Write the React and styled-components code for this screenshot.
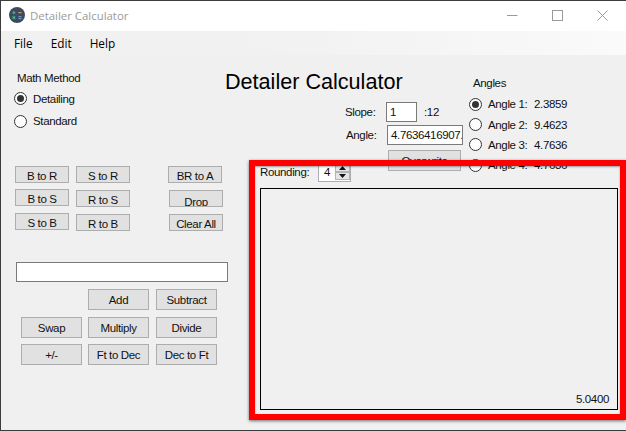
import React from "react";
import styled, { createGlobalStyle } from "styled-components";

const GlobalStyle = createGlobalStyle`
  html, body {
    margin: 0;
    padding: 0;
    background: #f0f0f0;
  }
`;

const Window = styled.div`
  position: relative;
  width: 626px;
  height: 431px;
  box-sizing: border-box;
  overflow: hidden;
  display: flex;
  flex-direction: column;
  background: #f0f0f0;
  border-top: 1px solid #3c3c3c;
  border-left: 1px solid #3c3c3c;
  border-bottom: 1px solid #3c3c3c;
  font-family: "Liberation Sans", Arial, sans-serif;
  font-size: 11.5px;
  letter-spacing: -0.35px;
  color: #111;
`;

const TitleBar = styled.div`
  flex: none;
  height: 30px;
  display: flex;
  align-items: flex-start;
  background: #fff;
  padding: 0 1px 0 8px;
  letter-spacing: 0;
`;

const AppIconWrap = styled.div`
  height: 28px;
  display: flex;
  align-items: center;
`;

const TitleText = styled.span`
  margin-left: 5px;
  flex: 1;
  line-height: 30px;
  font-family: "Open Sans", sans-serif;
  font-size: 11.4px;
  color: #9a9a9a;
`;

const WindowButton = styled.div`
  width: 45px;
  height: 28px;
  display: flex;
  align-items: center;
  justify-content: center;
  color: #9a9a9a;
`;

const MenuBar = styled.div`
  flex: none;
  height: 24px;
  display: flex;
  align-items: center;
  gap: 18px;
  padding-left: 13px;
  background: linear-gradient(90deg, #f0f0f0 0%, #f2f2f2 50%, #fafafa 100%);
  font-family: "Open Sans", sans-serif;
  font-size: 11.8px;
  letter-spacing: 0;
  color: #000;
`;

const Body = styled.div`
  flex: 1;
  display: flex;
`;

const LeftPane = styled.div`
  flex: none;
  width: 249px;
  box-sizing: border-box;
  padding: 16px 0 0 14px;
`;

const RightPane = styled.div`
  flex: 1;
  min-width: 0;
`;

const GroupLabel = styled.div`
  margin-left: ${(p) => p.$indent || 0}px;
  height: 14px;
  line-height: 14px;
`;

const RadioRow = styled.div`
  display: flex;
  align-items: center;
  height: ${(p) => p.$height}px;
`;

const RadioDot = styled.span`
  flex: none;
  box-sizing: border-box;
  width: 13px;
  height: 13px;
  border-radius: 50%;
  border: 1px solid #333;
  background: #fff;
  display: flex;
  align-items: center;
  justify-content: center;
  margin-right: 6px;

  &::after {
    content: "";
    width: 7px;
    height: 7px;
    border-radius: 50%;
    background: ${(p) => (p.$checked ? "#333" : "transparent")};
  }
`;

const MethodGroup = styled.div`
  display: flex;
  flex-direction: column;
  gap: 3px;
  margin: 0 0 36px -1px;
`;

const ConvertGrid = styled.div`
  display: flex;
  height: 96px;
`;

const ConvertColumn = styled.div`
  width: ${(p) => p.$width}px;
  display: flex;
  flex-direction: column;
`;

const PushButton = styled.button`
  display: block;
  box-sizing: border-box;
  flex: none;
  width: ${(p) => p.$width}px;
  height: ${(p) => p.$height}px;
  margin: ${(p) => p.$top || 0}px 0 0 ${(p) => p.$left || 0}px;
  padding: ${(p) => p.$padTop || 0}px 0 0;
  border: 1px solid #adadad;
  border-radius: 0;
  background: #e1e1e1;
  overflow: hidden;
  font-family: inherit;
  font-size: inherit;
  letter-spacing: inherit;
  line-height: 14px;
  color: #111;
  text-align: center;
`;

const TextField = styled.div`
  box-sizing: border-box;
  height: 20px;
  line-height: 18px;
  width: ${(p) => p.$width}px;
  margin-left: ${(p) => p.$left || 0}px;
  padding-left: 3px;
  border: 1px solid #7a7a7a;
  background: #fff;
  white-space: nowrap;
  overflow: hidden;
`;

const CalcRow = styled.div`
  display: grid;
  grid-template-columns: 60px 61px 61px;
  column-gap: 7px;
  margin-top: ${(p) => p.$top}px;
  margin-left: 6px;
`;

const TopRow = styled.div`
  height: 107px;
  display: flex;
`;

const FormColumn = styled.div`
  width: 219px;
  flex: none;
`;

const Heading = styled.h1`
  margin: 14px 0 0 -25px;
  height: 25px;
  line-height: 25px;
  font-size: 21.6px;
  font-weight: 400;
  letter-spacing: 0;
  color: #000;
  white-space: nowrap;
`;

const FormRow = styled.div`
  display: flex;
  align-items: center;
  height: 20px;
  margin-top: ${(p) => p.$top}px;
  margin-left: ${(p) => p.$left}px;
`;

const FormLabel = styled.span`
  width: ${(p) => p.$width}px;
  flex: none;
`;

const RatioSuffix = styled.span`
  margin-left: 7px;
`;

const AnglesColumn = styled.div`
  padding: 21px 0 0 0;
`;

const AngleGroup = styled.div`
  margin-top: 4px;
`;

const AngleLabel = styled.span`
  width: 46px;
  flex: none;
`;

const OutputSection = styled.div`
  margin-left: 10px;
`;

const RoundingRow = styled.div`
  display: flex;
  align-items: center;
  height: 20px;
`;

const RoundingLabel = styled.span`
  width: 58px;
  flex: none;
`;

const Spinner = styled.div`
  box-sizing: border-box;
  width: 33px;
  height: 20px;
  display: flex;
  justify-content: space-between;
  padding: 1px 0 1px 5px;
  border: 1px solid #abadb3;
  background: #fff;
  line-height: 16px;
`;

const SpinnerArrows = styled.div`
  width: 15px;
  display: flex;
  flex-direction: column;
`;

const SpinnerArrow = styled.div`
  flex: 1;
  display: flex;
  align-items: center;
  justify-content: center;
  box-sizing: border-box;
  border: 1px solid #b5b5b5;
  background: #e6e6e6;
`;

const OutputPanel = styled.div`
  box-sizing: border-box;
  width: 358px;
  height: 222px;
  margin-top: 6px;
  padding: 0 8px 4px 0;
  display: flex;
  align-items: flex-end;
  justify-content: flex-end;
  border: 1px solid #000;
`;

/* red callout drawn over the screenshot */
const Highlight = styled.div`
  position: absolute;
  left: 248px;
  top: 159px;
  width: 377px;
  height: 260px;
  box-sizing: border-box;
  border: 6px solid #ff0000;
  box-shadow: 0 1px 3px rgba(0, 0, 0, 0.55), inset 0 1px 2px rgba(0, 0, 0, 0.35);
  pointer-events: none;
`;

const AppIcon = () => (
  <svg width="16" height="16" viewBox="0 0 17 17">
    <circle cx="8.5" cy="8.5" r="8.5" fill="#3d4b62" />
    <path d="M3.5 6h3.4M5.2 4.3v3.4" stroke="#4fb58a" strokeWidth="1.1" />
    <path d="M10 6h3.4" stroke="#e8964a" strokeWidth="1.3" />
    <path d="M3.8 9.9l2.8 2.8M6.6 9.9l-2.8 2.8" stroke="#4fb58a" strokeWidth="1.1" />
    <path d="M10 10.3h3.4M10 12.4h3.4" stroke="#6fb0e0" strokeWidth="1" />
  </svg>
);

const Radio = ({ checked, height, children }) => (
  <RadioRow $height={height}>
    <RadioDot $checked={checked} />
    {children}
  </RadioRow>
);

const angles = [
  ["Angle 1:", "2.3859", true],
  ["Angle 2:", "9.4623", false],
  ["Angle 3:", "4.7636", false],
  ["Angle 4:", "4.7636", false],
];

export default function App() {
  return (
    <>
      <GlobalStyle />
      <Window>
        <TitleBar>
          <AppIconWrap>
            <AppIcon />
          </AppIconWrap>
          <TitleText>Detailer Calculator</TitleText>
          <WindowButton>
            <svg width="11" height="11" viewBox="0 0 11 11">
              <path d="M0 5.5h10.5" stroke="currentColor" />
            </svg>
          </WindowButton>
          <WindowButton>
            <svg width="11" height="11" viewBox="0 0 11 11">
              <rect x="0.5" y="0.5" width="10" height="10" fill="none" stroke="currentColor" />
            </svg>
          </WindowButton>
          <WindowButton>
            <svg width="11" height="11" viewBox="0 0 11 11">
              <path d="M0.5 0.5l10 10M10.5 0.5l-10 10" stroke="currentColor" />
            </svg>
          </WindowButton>
        </TitleBar>
        <MenuBar>
          <span>File</span>
          <span>Edit</span>
          <span>Help</span>
        </MenuBar>
        <Body>
          <LeftPane>
            <MethodGroup>
              <GroupLabel $indent={3}>Math Method</GroupLabel>
              <Radio checked height={21}>Detailing</Radio>
              <Radio height={18}>Standard</Radio>
            </MethodGroup>
            <ConvertGrid>
              <ConvertColumn $width={61}>
                <PushButton $width={54} $height={17} $padTop={2}>B to R</PushButton>
                <PushButton $width={54} $height={17} $padTop={2} $top={6}>B to S</PushButton>
                <PushButton $width={54} $height={17} $padTop={2} $top={7}>S to B</PushButton>
              </ConvertColumn>
              <ConvertColumn $width={92}>
                <PushButton $width={54} $height={17} $padTop={2}>S to R</PushButton>
                <PushButton $width={54} $height={17} $padTop={2} $top={7}>R to S</PushButton>
                <PushButton $width={54} $height={17} $padTop={2} $top={7}>R to B</PushButton>
              </ConvertColumn>
              <ConvertColumn $width={56}>
                <PushButton $width={54} $height={17} $padTop={2}>BR to A</PushButton>
                <PushButton $width={54} $height={17} $padTop={4} $top={7} $left={1}>Drop</PushButton>
                <PushButton $width={54} $height={17} $padTop={2} $top={7} $left={1}>Clear All</PushButton>
              </ConvertColumn>
            </ConvertGrid>
            <TextField $width={212} $left={1} />
            <CalcRow $top={7}>
              <span />
              <PushButton $width={61} $height={21}>Add</PushButton>
              <PushButton $width={61} $height={21}>Subtract</PushButton>
            </CalcRow>
            <CalcRow $top={7}>
              <PushButton $width={61} $height={21}>Swap</PushButton>
              <PushButton $width={61} $height={21}>Multiply</PushButton>
              <PushButton $width={61} $height={21}>Divide</PushButton>
            </CalcRow>
            <CalcRow $top={6}>
              <PushButton $width={61} $height={21}>+/-</PushButton>
              <PushButton $width={61} $height={21}>Ft to Dec</PushButton>
              <PushButton $width={61} $height={21}>Dec to Ft</PushButton>
            </CalcRow>
          </LeftPane>
          <RightPane>
            <TopRow>
              <FormColumn>
                <Heading>Detailer Calculator</Heading>
                <FormRow $top={8} $left={95}>
                  <FormLabel $width={41}>Slope:</FormLabel>
                  <TextField $width={31}>1</TextField>
                  <RatioSuffix>:12</RatioSuffix>
                </FormRow>
                <FormRow $top={3} $left={96}>
                  <FormLabel $width={41}>Angle:</FormLabel>
                  <TextField $width={76}>4.7636416907.</TextField>
                </FormRow>
                <PushButton $width={73} $height={21} $top={5} $left={138}>Overwrite</PushButton>
              </FormColumn>
              <AnglesColumn>
                <GroupLabel $indent={4}>Angles</GroupLabel>
                <AngleGroup>
                  {angles.map(([label, value, checked]) => (
                    <Radio key={label} checked={checked} height={20.4}>
                      <AngleLabel>{label}</AngleLabel>
                      {value}
                    </Radio>
                  ))}
                </AngleGroup>
              </AnglesColumn>
            </TopRow>
            <OutputSection>
              <RoundingRow>
                <RoundingLabel>Rounding:</RoundingLabel>
                <Spinner>
                  4
                  <SpinnerArrows>
                    <SpinnerArrow>
                      <svg width="7" height="4" viewBox="0 0 7 4"><path d="M3.5 0L7 4H0z" fill="#111" /></svg>
                    </SpinnerArrow>
                    <SpinnerArrow>
                      <svg width="7" height="4" viewBox="0 0 7 4"><path d="M0 0h7L3.5 4z" fill="#111" /></svg>
                    </SpinnerArrow>
                  </SpinnerArrows>
                </Spinner>
              </RoundingRow>
              <OutputPanel>5.0400</OutputPanel>
            </OutputSection>
          </RightPane>
        </Body>
        <Highlight />
      </Window>
    </>
  );
}
